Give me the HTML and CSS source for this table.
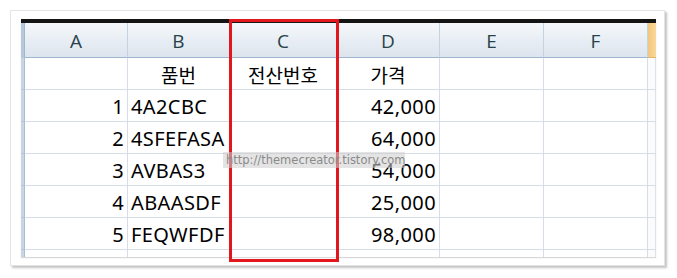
FILE: index.html
```html
<!DOCTYPE html>
<html lang="ko">
<head>
<meta charset="utf-8">
<link rel="stylesheet" href="styles.css">
</head>
<body>
<div class="card">
  <div class="sheet">
    <div class="grid">
      <div class="hd strip"></div>
      <div class="hd">A</div>
      <div class="hd">B</div>
      <div class="hd">C</div>
      <div class="hd">D</div>
      <div class="hd">E</div>
      <div class="hd">F</div>
      <div class="hd orange"></div>

      <div class="strip"></div>
      <div class="c"></div>
      <div class="c ctr ko">품번</div>
      <div class="c ctr ko">전산번호</div>
      <div class="c ctr ko">가격</div>
      <div class="c"></div>
      <div class="c"></div>
      <div class="c end"></div>

      <div class="strip"></div>
      <div class="c r">1</div>
      <div class="c l">4A2CBC</div>
      <div class="c"></div>
      <div class="c r">42,000</div>
      <div class="c"></div>
      <div class="c"></div>
      <div class="c end"></div>

      <div class="strip"></div>
      <div class="c r">2</div>
      <div class="c l">4SFEFASA</div>
      <div class="c"></div>
      <div class="c r">64,000</div>
      <div class="c"></div>
      <div class="c"></div>
      <div class="c end"></div>

      <div class="strip"></div>
      <div class="c r">3</div>
      <div class="c l">AVBAS3</div>
      <div class="c"></div>
      <div class="c r">54,000</div>
      <div class="c"></div>
      <div class="c"></div>
      <div class="c end"></div>

      <div class="strip"></div>
      <div class="c r">4</div>
      <div class="c l">ABAASDF</div>
      <div class="c"></div>
      <div class="c r">25,000</div>
      <div class="c"></div>
      <div class="c"></div>
      <div class="c end"></div>

      <div class="strip"></div>
      <div class="c r">5</div>
      <div class="c l">FEQWFDF</div>
      <div class="c"></div>
      <div class="c r">98,000</div>
      <div class="c"></div>
      <div class="c"></div>
      <div class="c end"></div>

      <div class="strip last"></div>
      <div class="c last"></div>
      <div class="c last"></div>
      <div class="c last"></div>
      <div class="c last"></div>
      <div class="c last"></div>
      <div class="c last"></div>
      <div class="c end last"></div>
    </div>
    <div class="redbox"></div>
    <div class="watermark">http://themecreator.tistory.com</div>
  </div>
</div>
</body>
</html>
```
FILE: styles.css
```css
* { box-sizing: border-box; }
html, body { margin: 0; padding: 0; background: #ffffff; }
body { width: 677px; height: 278px; overflow: hidden; }

.card {
  margin: 10px 0 0 10px;
  width: 655px;
  height: 256px;
  border: 1px solid #e4e4e4;
  box-shadow: 2px 2px 2px #c4c4c4;
  background: #ffffff;
  padding: 8px 9px 0 10px;
}

.sheet {
  position: relative;
  width: 635px;
  height: 238px;
  border-top: 4px solid #151515;
  box-shadow: 0 1px 1px #d8d8d8;
}

.grid {
  display: grid;
  grid-template-columns: 4px 103px 102px 107px 103px 104px 104px 8px;
  grid-template-rows: 35px repeat(6, 32px) 7px;
  font-family: "Noto Sans", "Noto Sans CJK KR", sans-serif;
  font-size: 20px;
  letter-spacing: 0.4px;
  color: #000000;
}

.hd {
  background: linear-gradient(#f5f8fb, #e6ecf3 60%, #dce4ed);
  border-right: 1px solid #c5d2df;
  border-bottom: 1px solid #9eb6ce;
  display: flex;
  align-items: center;
  justify-content: center;
  font-family: "Open Sans", "Noto Sans", sans-serif;
  font-size: 19px;
  letter-spacing: 0;
  color: #27424a;
  padding-top: 1px;
}
.hd.strip { background: #b7c8dc; border-right: 1px solid #a2b6cd; }
.hd.orange { background: linear-gradient(90deg, #f3c77c, #f9d89a); border-right: none; border-bottom: 1px solid #e2b769; }

.strip {
  background: #c7d5e5;
  border-right: 1px solid #a9bcd2;
  border-bottom: 1px solid #b9c8d9;
}

.c {
  border-right: 1px solid #d6dde8;
  border-bottom: 1px solid #d6dde8;
  display: flex;
  align-items: center;
  white-space: nowrap;
  padding-top: 1px;
}
.c.end { background: #fbfbfb; border-right: 1px solid #dde2ea; }
.c.last, .strip.last { border-bottom: none; }
.ctr { justify-content: center; }
.ko { font-family: "Noto Sans CJK KR", sans-serif; font-size: 19px; letter-spacing: 0; }
.r { justify-content: flex-end; padding-right: 3px; }
.l { justify-content: flex-start; padding-left: 3px; }

.redbox {
  position: absolute;
  left: 208px;
  top: -4px;
  width: 110px;
  height: 243px;
  border: 3px solid #e1171d;
}

.watermark {
  position: absolute;
  left: 202px;
  top: 129px;
  width: 182px;
  height: 16px;
  background: rgba(205, 205, 205, 0.55);
  color: #8a8a8a;
  font-family: "DejaVu Sans", sans-serif;
  font-size: 11.5px;
  line-height: 16px;
  padding-left: 3px;
  letter-spacing: 0;
  white-space: nowrap;
}
```
